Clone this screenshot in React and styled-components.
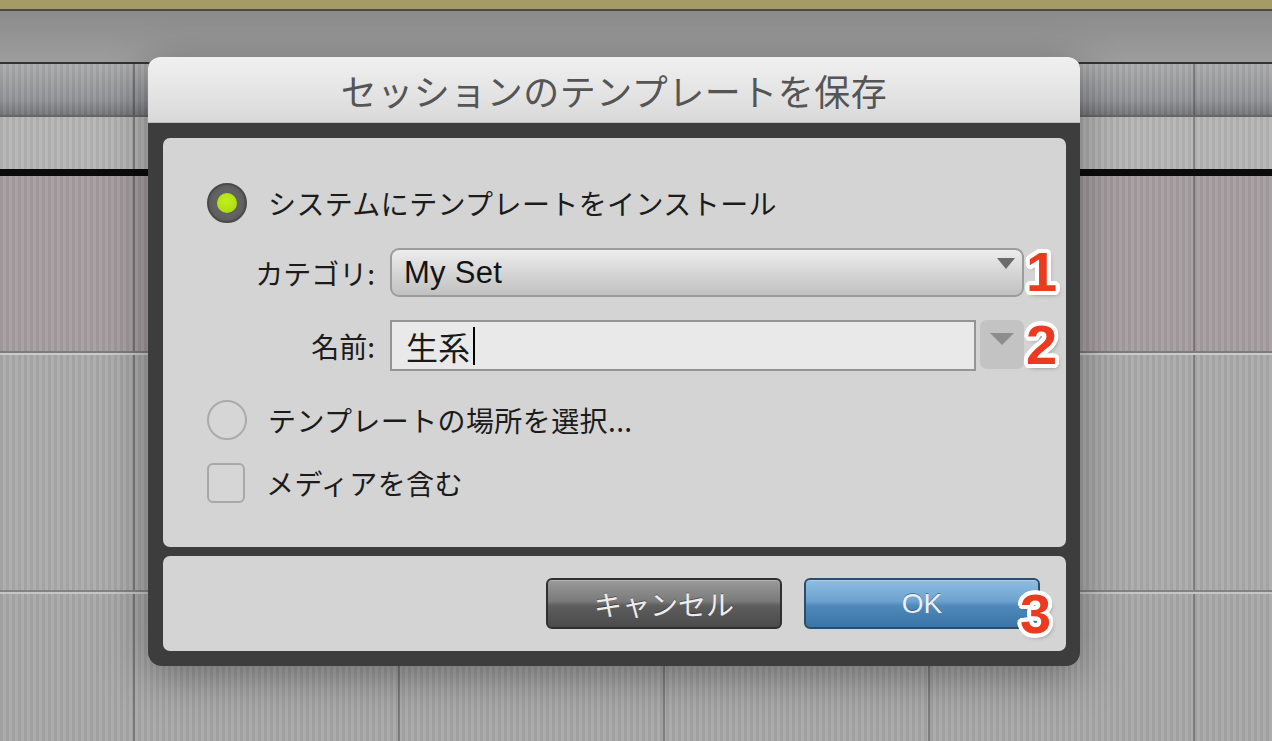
import React from 'react'
import styled, { createGlobalStyle } from 'styled-components'

const GlobalStyle = createGlobalStyle`
  body {
    margin: 0;
    overflow: hidden;
    font-family: "Liberation Sans", "Noto Sans CJK JP", sans-serif;
  }
`

// vertical track stripes + column dividers of the session window behind
const stripes = 'repeating-linear-gradient(90deg, rgba(0,0,0,0.05) 0 3px, rgba(255,255,255,0.04) 3px 6px)'
const dividers = 'repeating-linear-gradient(90deg, transparent 0 133px, rgba(70,70,70,0.45) 133px 135px, transparent 135px 265px)'

const outline = Array.from({ length: 16 }, (_, i) => {
  const a = (i * Math.PI) / 8
  return `${(Math.cos(a) * 4).toFixed(1)}px ${(Math.sin(a) * 4).toFixed(1)}px 0 #fff`
}).join(', ') + ', 2px 3px 5px rgba(0,0,0,0.5)'

function App() {
  return (
    <Desk>
      <GlobalStyle />
      <Strip $h={11} $bg="#a49b66" $bottom="2px solid #4d4b3e" />
      <Strip $h={53} $bg="linear-gradient(#8b8b8b, #9d9d9d)" $bottom="2px solid #333" />
      <Strip $h={53} $grid $bg="linear-gradient(#adadae, #94959a 70%, #76777b)" $bottom="2px solid #666" />
      <Strip $h={52} $grid $bg="#b6b6b6" />
      <Strip $h={7} $bg="#0b0b0b" />
      <Strip $h={177} $grid $bg="#a79fa1" $bottom="2px solid #7e7b7c" />
      <Strip $h={239} $grid $bg="#acacac" $top="2px solid #cbcbcb" $bottom="2px solid #838383" />
      <Strip $grow $grid $bg="#a9a9a9" $top="2px solid #c6c6c6" />

      <Dialog>
        <TitleBar>セッションのテンプレートを保存</TitleBar>
        <Body>
          <MainPanel>
            <OptionRow>
              <Radio $on><Dot /></Radio>
              システムにテンプレートをインストール
            </OptionRow>

            <FieldGrid>
              <FieldLabel>カテゴリ:</FieldLabel>
              <Anchor>
                <Select>
                  My Set
                  <SelectArrow width="18" height="11" viewBox="0 0 18 11">
                    <path d="M0 0 H18 L9 11 Z" fill="#6b6b6b" />
                  </SelectArrow>
                </Select>
                <Badge>1</Badge>
              </Anchor>

              <FieldLabel>名前:</FieldLabel>
              <Anchor>
                <NameRow>
                  <TextInput>
                    生系<Caret />
                  </TextInput>
                  <ComboButton>
                    <svg width="24" height="13" viewBox="0 0 24 13">
                      <path d="M0 0 H24 L12 12 Z" fill="#8d8d8d" />
                    </svg>
                  </ComboButton>
                </NameRow>
                <Badge>2</Badge>
              </Anchor>
            </FieldGrid>

            <OptionRow $mt={29}>
              <Radio />
              テンプレートの場所を選択...
            </OptionRow>
            <OptionRow $mt={23}>
              <Check />
              メディアを含む
            </OptionRow>
          </MainPanel>

          <ButtonPanel>
            <Button>キャンセル</Button>
            <Anchor>
              <Button $primary>OK</Button>
              <Badge $inset>3</Badge>
            </Anchor>
          </ButtonPanel>
        </Body>
      </Dialog>
    </Desk>
  )
}
export default App

const Desk = styled.div`
position: relative;
width: 1272px;
height: 741px;
overflow: hidden;
display: flex;
flex-direction: column;
background: #a9a9a9;
`
const Strip = styled.div`
box-sizing: border-box;
flex: ${p => (p.$grow ? '1 1 auto' : `0 0 ${p.$h}px`)};
background: ${p => (p.$grid ? `${dividers}, ${stripes}, ` : '')}${p => p.$bg};
border-top: ${p => p.$top || 'none'};
border-bottom: ${p => p.$bottom || 'none'};
`
const Dialog = styled.div`
position: absolute;
left: 148px;
top: 57px;
width: 932px;
border-radius: 12px 12px 14px 14px;
background: #3d3d3d;
box-shadow: 0 10px 45px rgba(0,0,0,0.35);
`
const TitleBar = styled.div`
box-sizing: border-box;
height: 66px;
border-radius: 12px 12px 0 0;
background: linear-gradient(#f0f0f0, #e4e4e4 55%, #d9d9d9);
border-bottom: 1px solid #bcbcbc;
display: flex;
align-items: center;
justify-content: center;
font-family: "Noto Sans CJK JP", sans-serif;
font-size: 36px;
letter-spacing: 0.5px;
color: #555;
`
const Body = styled.div`
padding: 15px 14px 15px 15px;
display: flex;
flex-direction: column;
gap: 9px;
`
const MainPanel = styled.div`
box-sizing: border-box;
height: 409px;
background: #d4d4d4;
border-radius: 7px;
padding: 45px 0 0 44px;
display: flex;
flex-direction: column;
`
const OptionRow = styled.div`
display: flex;
align-items: center;
gap: 21px;
height: 40px;
margin-top: ${p => p.$mt || 0}px;
font-family: "Noto Sans CJK JP", sans-serif;
font-size: 28px;
letter-spacing: 0.4px;
color: #1b1b1b;
`
const Radio = styled.span`
flex: none;
box-sizing: border-box;
width: 40px;
height: 40px;
border-radius: 50%;
display: flex;
align-items: center;
justify-content: center;
border: 2px solid ${p => (p.$on ? '#4a4a4a' : '#ababab')};
background: ${p => (p.$on ? 'radial-gradient(circle, #626262 55%, #505050)' : '#d6d6d6')};
`
const Dot = styled.span`
width: 20px;
height: 20px;
border-radius: 50%;
background: radial-gradient(circle at 45% 40%, #c2ee1c, #a6d80c);
`
const Check = styled.span`
flex: none;
box-sizing: border-box;
width: 38px;
height: 40px;
border: 2px solid #a8a8a8;
border-radius: 6px;
background: #d6d6d6;
`
const FieldGrid = styled.div`
margin-top: 25px;
display: grid;
grid-template-columns: 168px 634px;
grid-template-rows: 49px 51px;
column-gap: 15px;
row-gap: 23px;
`
const FieldLabel = styled.div`
justify-self: end;
align-self: center;
font-family: "Noto Sans CJK JP", sans-serif;
font-size: 28px;
color: #1b1b1b;
`
const Anchor = styled.div`
position: relative;
`
const Select = styled.div`
box-sizing: border-box;
height: 49px;
border: 2px solid #9c9c9c;
border-radius: 9px;
background: linear-gradient(#ededed, #d8d8d8 45%, #c1c1c1);
display: flex;
align-items: center;
padding-left: 12px;
font-family: "Liberation Sans", sans-serif;
font-size: 31px;
letter-spacing: 0.3px;
color: #141414;
`
const SelectArrow = styled.svg`
margin-left: auto;
margin-right: 7px;
align-self: flex-start;
margin-top: 8px;
`
const NameRow = styled.div`
display: flex;
gap: 4px;
height: 51px;
`
const TextInput = styled.div`
box-sizing: border-box;
width: 586px;
height: 51px;
border: 2px solid #949494;
background: #e9e9e9;
padding-left: 14px;
display: flex;
align-items: center;
font-family: "Noto Sans CJK JP", sans-serif;
font-size: 32px;
color: #1a1a1a;
`
const Caret = styled.span`
width: 2px;
height: 38px;
margin-left: 3px;
background: #000;
`
const ComboButton = styled.div`
width: 44px;
height: 49px;
border-radius: 7px;
background: #c3c3c3;
display: flex;
justify-content: center;
padding-top: 13px;
box-sizing: border-box;
`
const Badge = styled.span`
position: absolute;
top: 50%;
left: ${p => (p.$inset ? 'calc(100% - 20px)' : 'calc(100% + 2px)')};
transform: translateY(-52%);
font-family: "Liberation Sans", sans-serif;
font-weight: 700;
font-size: 56px;
line-height: 1;
color: #eb3a1f;
text-shadow: ${outline};
`
const ButtonPanel = styled.div`
box-sizing: border-box;
height: 95px;
background: #d4d4d4;
border-radius: 7px;
display: flex;
justify-content: flex-end;
gap: 22px;
padding: 22px 26px 0 0;
`
const Button = styled.div`
box-sizing: border-box;
width: 236px;
height: 51px;
border-radius: 6px;
display: flex;
align-items: center;
justify-content: center;
font-family: "Liberation Sans", "Noto Sans CJK JP", sans-serif;
font-size: 28px;
border: 2px solid ${p => (p.$primary ? '#2b4d6c' : '#303030')};
color: ${p => (p.$primary ? '#e9f0f7' : '#ededed')};
background: ${p => (p.$primary
    ? 'linear-gradient(#8fbde2, #6da2cf 45%, #4f89ba 55%, #3b75a7)'
    : 'linear-gradient(#9b9b9b, #7a7a7a 45%, #5d5d5d 55%, #4b4b4b)')};
box-shadow: inset 0 1px 0 rgba(255,255,255,0.25);
text-shadow: 0 -1px 0 rgba(0,0,0,0.35);
`
